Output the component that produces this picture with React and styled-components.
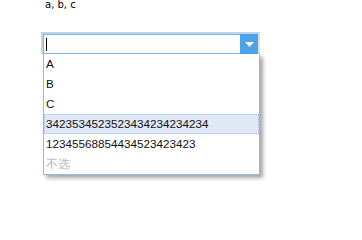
import React from 'react';
import styled, { createGlobalStyle } from 'styled-components';

const GlobalStyle = createGlobalStyle`
  html, body {
    margin: 0;
    padding: 0;
    background: #ffffff;
  }
  body {
    font-family: "Liberation Sans", Tahoma, sans-serif;
  }
`;

const Page = styled.div`
  padding: 0 0 0 41px;
  width: 362px;
  height: 240px;
  box-sizing: border-box;
`;

const Caption = styled.div`
  padding-left: 4px;
  height: 10px;
  line-height: 10px;
  font-size: 10px;
  color: #000;
  font-family: "DejaVu Sans", sans-serif;
`;

const Combo = styled.div`
  margin-top: 22px;
  width: 219px;
`;

const Field = styled.div`
  display: flex;
  height: 20px;
  border: 2px solid #bcd6ee;
  border-bottom-width: 0;
  border-right-color: #d8dde3;
`;

const Input = styled.div`
  flex: 1;
  display: flex;
  align-items: center;
  border: 1px solid #7eb4ea;
  border-right: none;
  padding-left: 2px;
`;

const Caret = styled.span`
  width: 1px;
  height: 13px;
  background: #000;
`;

const Trigger = styled.div`
  width: 18px;
  background: #4ca3e8;
  display: flex;
  align-items: center;
  justify-content: center;
`;

const List = styled.ul`
  list-style: none;
  margin: 0 0 0 2px;
  padding: 0;
  width: 215px;
  border: 1px solid #95b8e7;
  border-top: none;
  background: #fff;
  box-shadow: 3px 3px 4px rgba(0, 0, 0, 0.35);
`;

const Item = styled.li`
  height: 20px;
  padding-left: 1px;
  font-size: 11.7px;
  box-sizing: border-box;
  color: ${(p) => (p.$muted ? '#b4b4b4' : '#111')};
  background: ${(p) => (p.$active ? '#e0e8f6' : 'transparent')};
  border: 1px dotted ${(p) => (p.$active ? '#9cb8e5' : 'transparent')};
  line-height: 18px;
  white-space: nowrap;
`;

const items = ['A', 'B', 'C', '3423534523523434234234234', '12345568854434523423423'];

export default function App() {
  return (
    <Page>
      <GlobalStyle />
      <Caption>a, b, c</Caption>
      <Combo>
        <Field>
          <Input>
            <Caret />
          </Input>
          <Trigger>
            <svg width="9" height="5" viewBox="0 0 9 5">
              <path d="M0 0H9L4.5 5Z" fill="#fff" />
            </svg>
          </Trigger>
        </Field>
        <List>
          {items.map((t, i) => (
            <Item key={t} $active={i === 3}>{t}</Item>
          ))}
          <Item $muted>不选</Item>
        </List>
      </Combo>
    </Page>
  );
}
